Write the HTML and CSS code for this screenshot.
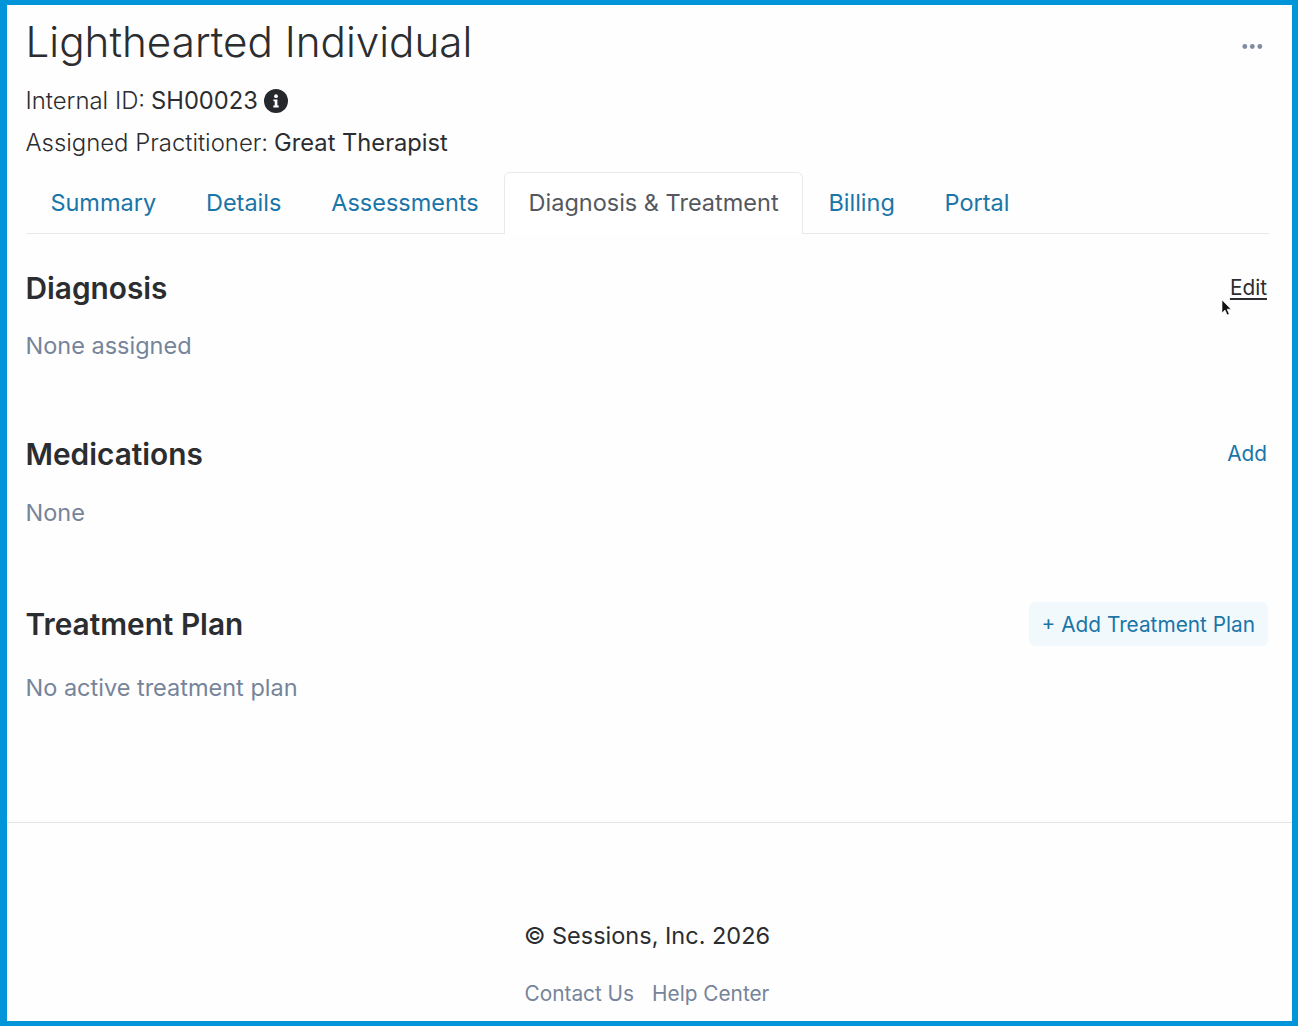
FILE: index.html
```html
<!DOCTYPE html>
<html lang="en">
  <head>
    <meta charset="UTF-8" />
    <meta name="viewport" content="width=device-width, initial-scale=1.0" />
    <title>Lighthearted Individual</title>
    <link rel="stylesheet" href="styles.css">
  </head>
  <body>
    <div class="frame">
      <main class="client">
        <div class="client-header">
          <h1>Lighthearted Individual</h1>
          <button class="more" type="button" aria-label="More">
            <svg width="21" height="5" viewBox="0 0 21 5">
              <circle cx="2.8" cy="2.5" r="2.4" />
              <circle cx="10.3" cy="2.5" r="2.4" />
              <circle cx="17.8" cy="2.5" r="2.4" />
            </svg>
          </button>
        </div>
        <p class="meta meta-id">
          Internal ID: <span class="meta-value">SH00023</span>
          <svg class="info" width="24" height="24" viewBox="0 0 24 24">
            <circle cx="12" cy="12" r="12" fill="#26282b" />
            <circle cx="12" cy="7.2" r="1.9" fill="#fff" />
            <path d="M9.4 10.4h4v6.2h1.3v1.8H9.3v-1.8h1.4v-4.4H9.4z" fill="#fff" />
          </svg>
        </p>
        <p class="meta meta-practitioner">
          Assigned Practitioner: <span class="meta-value">Great Therapist</span>
        </p>

        <nav class="tabs">
          <a class="tab" href="#">Summary</a>
          <a class="tab" href="#">Details</a>
          <a class="tab" href="#">Assessments</a>
          <a class="tab active" href="#">Diagnosis &amp; Treatment</a>
          <a class="tab" href="#">Billing</a>
          <a class="tab" href="#">Portal</a>
        </nav>

        <section class="section section-diagnosis">
          <div class="section-head">
            <h2>Diagnosis</h2>
            <a class="link link-hover" href="#">Edit</a>
          </div>
          <p class="empty">None assigned</p>
        </section>

        <section class="section section-medications">
          <div class="section-head">
            <h2>Medications</h2>
            <a class="link" href="#">Add</a>
          </div>
          <p class="empty">None</p>
        </section>

        <section class="section section-plan">
          <div class="section-head">
            <h2>Treatment Plan</h2>
            <a class="btn-light" href="#">+ Add Treatment Plan</a>
          </div>
          <p class="empty">No active treatment plan</p>
        </section>
      </main>

      <footer class="footer">
        <p class="copyright">© Sessions, Inc. 2026</p>
        <div class="footer-links">
          <a href="#">Contact Us</a>
          <a href="#">Help Center</a>
        </div>
      </footer>

      <svg class="cursor" width="12" height="18" viewBox="0 0 12 18">
        <path d="M1 1v13l3-3 2.2 5 2-.9-2.1-4.9H10z" fill="#111" stroke="#fff" stroke-width="0.6" />
      </svg>
    </div>
  </body>
</html>
```

FILE: styles.css
```css
* {
  box-sizing: border-box;
}

body {
  margin: 0;
  font-family: "Inter", "Liberation Sans", sans-serif;
  color: #2b2d30;
  background-color: #fff;
}

.frame {
  position: relative;
  display: flex;
  flex-direction: column;
  height: 1026px;
  border: solid #0094d8;
  border-width: 5px 6px 5px 7px;
  background-color: #fefefe;
}

.client {
  height: 818px;
  padding: 0 23px 0 18.5px;
  border-bottom: 1px solid #e2e5e9;
}

.client-header {
  display: flex;
  justify-content: space-between;
  align-items: flex-start;
  height: 81px;
}

h1 {
  margin: 11px 0 0;
  font-size: 42.2px;
  font-weight: 300;
  line-height: 51px;
}

.more {
  margin: 39px 6px 0 0;
  padding: 0;
  border: none;
  background: none;
  line-height: 0;
}

.more svg {
  fill: #7f8ba0;
}

.meta {
  display: flex;
  align-items: center;
  gap: 6px;
  margin: 0;
  font-size: 23.9px;
  font-weight: 300;
  line-height: 30px;
}

.meta-practitioner {
  margin-top: 12px;
}

.meta-value {
  font-size: 23.7px;
  font-weight: 400;
}

.info {
  flex: none;
}

.tabs {
  display: flex;
  height: 62px;
  margin-top: 14px;
  border-bottom: 1px solid #e6e8ec;
}

.tab {
  height: 62px;
  padding: 14px 23.9px 0;
  border: 1px solid transparent;
  border-bottom: none;
  font-size: 23.5px;
  line-height: 31px;
  color: #1a75a8;
  text-decoration: none;
}

.active {
  border-color: #e8eaee;
  border-radius: 6px 6px 0 0;
  background-color: #fff;
  color: #54585e;
}

.section-head {
  display: flex;
  justify-content: space-between;
  align-items: center;
}

h2 {
  margin: 0;
  font-size: 29.8px;
  font-weight: 600;
  line-height: 36px;
}

.section-diagnosis {
  padding-top: 36px;
}

.section-medications {
  padding-top: 75px;
}

.section-plan {
  padding-top: 74px;
}

.link {
  margin: 0 2px 2px 0;
  font-size: 20.8px;
  color: #1a75a8;
  text-decoration: none;
}

.link-hover {
  color: #2b2d30;
  text-decoration: underline;
  text-underline-offset: 3px;
}

.btn-light {
  display: block;
  height: 44px;
  margin-right: 1px;
  padding: 0 13px;
  border-radius: 6px;
  background-color: #f2f9fd;
  font-size: 20.8px;
  line-height: 46px;
  color: #1a75a8;
  text-decoration: none;
}

.empty {
  margin: 24px 0 0;
  font-size: 23.5px;
  line-height: 31px;
  color: #76849a;
}

.section-medications .empty {
  margin-top: 25px;
}

.section-plan .empty {
  margin-top: 26px;
}

.footer {
  padding-right: 5px;
  text-align: center;
}

.copyright {
  margin: 97px 0 0;
  font-size: 23.5px;
  line-height: 31px;
}

.footer-links {
  display: flex;
  justify-content: center;
  gap: 18px;
  margin-top: 29px;
}

.footer-links a {
  font-size: 20.8px;
  line-height: 28px;
  color: #76849a;
  text-decoration: none;
}

.cursor {
  position: absolute;
  left: 1214px;
  top: 294px;
}
```
